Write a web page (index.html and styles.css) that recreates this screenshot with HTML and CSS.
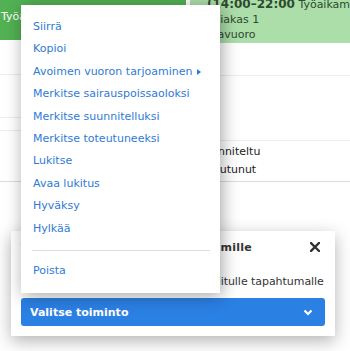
FILE: index.html
```html
<!DOCTYPE html>
<html lang="fi">
<head>
  <meta charset="UTF-8">
  <meta name="viewport" content="width=device-width, initial-scale=1.0">
  <title>Vuorosuunnittelu</title>
  <link rel="stylesheet" href="styles.css">
</head>
<body>
  <div class="calendar">
    <div class="events">
      <div class="event event-dark">Työaikamalli</div>
      <div class="event event-light">
        <div class="event-lines">
          <div><b class="event-time">(14:00–22:00</b> Työaikamalli</div>
          <div>Asiakas 1</div>
          <div>Iltavuoro</div>
        </div>
      </div>
    </div>
    <div class="grid">
      <div class="col col-left">
        <div class="row" style="height: 32px"></div>
        <div class="row" style="height: 43px"></div>
        <div class="row" style="height: 13px"></div>
        <div class="row row-dark" style="height: 51px"></div>
      </div>
      <div class="col col-right">
        <div class="row" style="height: 33px"></div>
        <div class="row" style="height: 65px"></div>
        <div class="row row-dark legend" style="height: 41px">
          <div>Suunniteltu</div>
          <div>Toteutunut</div>
        </div>
      </div>
    </div>
  </div>

  <div class="dialog">
    <div class="dialog-header">
      <span class="dialog-title">Toimenpiteet valituille tapahtumille</span>
      <svg class="close" width="10" height="10" viewBox="0 0 10 10">
        <path d="M1 1 L9 9 M9 1 L1 9" stroke="#333" stroke-width="2.4" stroke-linecap="square"/>
      </svg>
    </div>
    <div class="dialog-body">Valitse toiminto, joka suoritetaan valitulle tapahtumalle</div>
    <button type="button" class="action-button">
      <span>Valitse toiminto</span>
      <svg width="10" height="7" viewBox="0 0 10 7">
        <polyline points="1.5,1.5 5,5 8.5,1.5" fill="none" stroke="#fff" stroke-width="2.2"/>
      </svg>
    </button>
  </div>

  <ul class="context-menu">
    <li>Siirrä</li>
    <li>Kopioi</li>
    <li>Avoimen vuoron tarjoaminen<span class="caret"></span></li>
    <li>Merkitse sairauspoissaoloksi</li>
    <li>Merkitse suunnitelluksi</li>
    <li>Merkitse toteutuneeksi</li>
    <li>Lukitse</li>
    <li>Avaa lukitus</li>
    <li>Hyväksy</li>
    <li>Hylkää</li>
    <li class="divider"></li>
    <li>Poista</li>
  </ul>
</body>
</html>
```

FILE: styles.css
```css
body {
  margin: 0;
  font-family: "DejaVu Sans", Verdana, sans-serif;
  font-size: 11px;
  background: #fff;
  overflow: hidden;
  height: 351px;
}
.events {
  display: flex;
  height: 43px;
  overflow: hidden;
}
.event {
  box-sizing: border-box;
}
.event-dark {
  width: 186px;
  height: 40px;
  background-color: #52b153;
  color: #fff;
  padding: 10px 0 0 1px;
  line-height: 14px;
  white-space: nowrap;
  overflow: hidden;
}
.event-light {
  flex: 1;
  margin-left: 4px;
  height: 43px;
  background-color: #acdea9;
  color: #2f4a2f;
  padding-left: 17px;
  line-height: 15px;
  white-space: nowrap;
  overflow: hidden;
}
.event-lines {
  margin-top: -3px;
}
.event-time {
  font-size: 12px;
}
.grid {
  display: flex;
}
.col-left {
  width: 190px;
}
.col-right {
  flex: 1;
}
.row {
  box-sizing: border-box;
  border-bottom: 1px solid #ececec;
}
.row-dark {
  border-bottom-color: #dcdcdc;
}
.legend {
  padding: 2px 0 0 7px;
  line-height: 18px;
  color: #222;
}
.context-menu {
  position: absolute;
  z-index: 10;
  left: 21px;
  top: 5px;
  width: 199px;
  margin: 0;
  padding: 11px 0;
  list-style: none;
  background: #fff;
  box-shadow: 2px 3px 16px rgba(0, 0, 0, 0.36);
  box-sizing: border-box;
}
.context-menu li {
  padding-left: 12px;
  line-height: 22.4px;
  color: #2f7bd6;
  white-space: nowrap;
}
.caret {
  display: inline-block;
  margin-left: 5px;
  border-left: 4px solid #2f7bd6;
  border-top: 3.5px solid transparent;
  border-bottom: 3.5px solid transparent;
  vertical-align: 0;
}
.context-menu li.divider {
  height: 1px;
  padding: 0;
  margin: 10px 10px 9px 11px;
  background: #dedede;
  line-height: 1px;
}
.dialog {
  position: absolute;
  z-index: 5;
  left: 11px;
  top: 231px;
  width: 324px;
  box-sizing: border-box;
  padding: 8px 10px 10px;
  background: #fff;
  box-shadow: 0 5px 16px rgba(0, 0, 0, 0.3);
}
.dialog-header {
  display: flex;
  justify-content: space-between;
  align-items: center;
  height: 16px;
}
.dialog-title {
  font-weight: bold;
  color: #333;
  white-space: nowrap;
  letter-spacing: 0.25px;
}
.close {
  margin-right: 5px;
}
.dialog-body {
  margin-top: 19px;
  line-height: 16px;
  color: #333;
  white-space: nowrap;
  letter-spacing: -0.05px;
}
.action-button {
  display: flex;
  justify-content: space-between;
  align-items: center;
  width: 100%;
  height: 28px;
  margin-top: 8px;
  padding: 0 12px 0 9px;
  border: none;
  border-radius: 3px;
  background-color: #2b80e4;
  color: #fff;
  font-family: "DejaVu Sans", Verdana, sans-serif;
  font-size: 11px;
  font-weight: bold;
}
```
